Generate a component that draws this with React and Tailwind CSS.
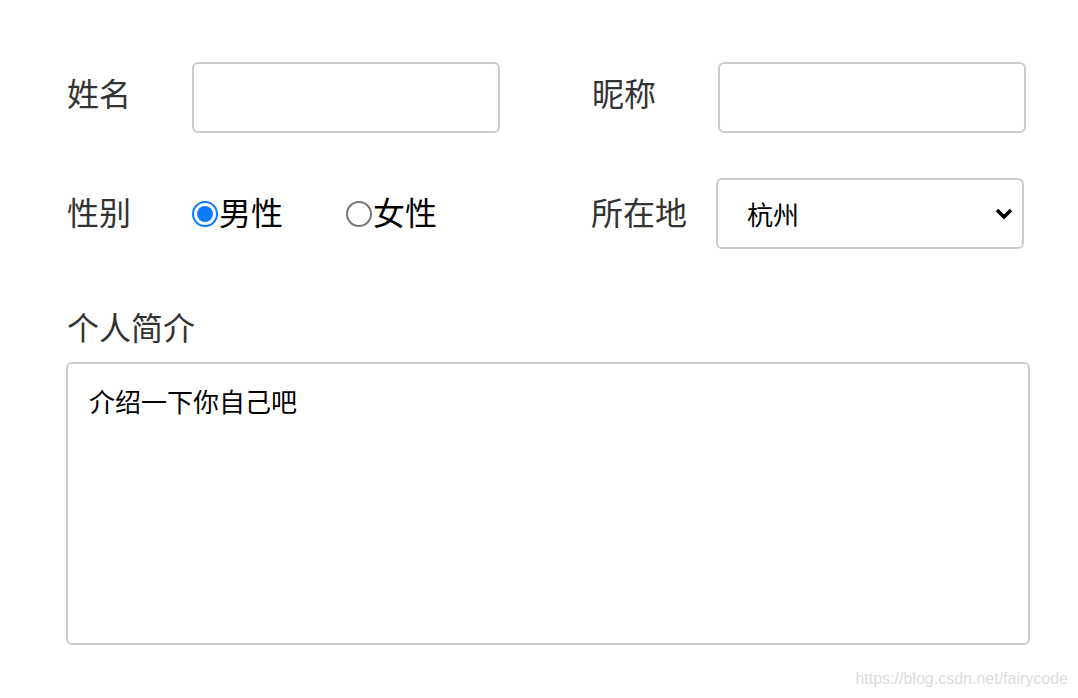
export default function App() {
  const font = { fontFamily: '"Noto Sans CJK SC", "Noto Sans", sans-serif' };

  return (
    <div className="relative w-[1078px] h-[698px] bg-white pl-[67px] pt-[62px]" style={font}>
      {/* row 1 */}
      <div className="flex items-center h-[71px]">
        <div className="flex items-center w-[525px]">
          <label className="w-[125px] pb-[12px] text-[32px] leading-[32px] text-[#333]">姓名</label>
          <input className="w-[308px] h-[71px] border-2 border-[#ccc] rounded-[6px] outline-none px-3 text-[26px]" />
        </div>
        <div className="flex items-center">
          <label className="w-[126px] pb-[12px] text-[32px] leading-[32px] text-[#333]">昵称</label>
          <input className="w-[308px] h-[71px] border-2 border-[#ccc] rounded-[6px] outline-none px-3 text-[26px]" />
        </div>
      </div>

      {/* row 2 */}
      <div className="flex items-center h-[71px] mt-[45px]">
        <div className="flex items-center w-[524px]">
          <label className="w-[125px] pb-[6px] text-[32px] leading-[32px] text-[#333]">性别</label>
          <div className="flex items-center w-[154px]">
            <span className="w-[26px] h-[26px] rounded-full border-2 border-[#0a7aff] flex items-center justify-center">
              <span className="w-[16px] h-[16px] rounded-full bg-[#0a7aff]" />
            </span>
            <span className="ml-[1px] pb-[6px] text-[32px] leading-[32px] text-black">男性</span>
          </div>
          <div className="flex items-center">
            <span className="w-[26px] h-[26px] rounded-full border-2 border-[#767676]" />
            <span className="ml-[1px] pb-[6px] text-[32px] leading-[32px] text-black">女性</span>
          </div>
        </div>
        <div className="flex items-center">
          <label className="w-[125px] pb-[6px] text-[32px] leading-[32px] text-[#333]">所在地</label>
          <div className="w-[308px] h-[71px] border-2 border-[#ccc] rounded-[6px] flex items-center justify-between pl-[29px] pr-[8px]">
            <span className="text-[26px] leading-[26px] text-black">杭州</span>
            <svg width="20" height="14" viewBox="0 0 20 14">
              <path d="M3 3 L10 10 L17 3" fill="none" stroke="#000" strokeWidth="3.6" />
            </svg>
          </div>
        </div>
      </div>

      {/* row 3 */}
      <div className="mt-[61px] text-[32px] leading-[32px] text-[#333]">个人简介</div>
      <textarea
        className="mt-[20px] -ml-[1px] block w-[964px] h-[283px] border-2 border-[#ccc] rounded-[6px] outline-none resize-none px-[21px] py-[22px] text-[26px] leading-[30px] text-black"
        defaultValue="介绍一下你自己吧"
        style={font}
      />

      <div className="absolute right-[10px] bottom-[9px] text-[16px] leading-[20px] text-[#dcdcdc]" style={{ fontFamily: '"Liberation Sans", Arial, sans-serif' }}>
        https://blog.csdn.net/fairycode
      </div>
    </div>
  );
}
